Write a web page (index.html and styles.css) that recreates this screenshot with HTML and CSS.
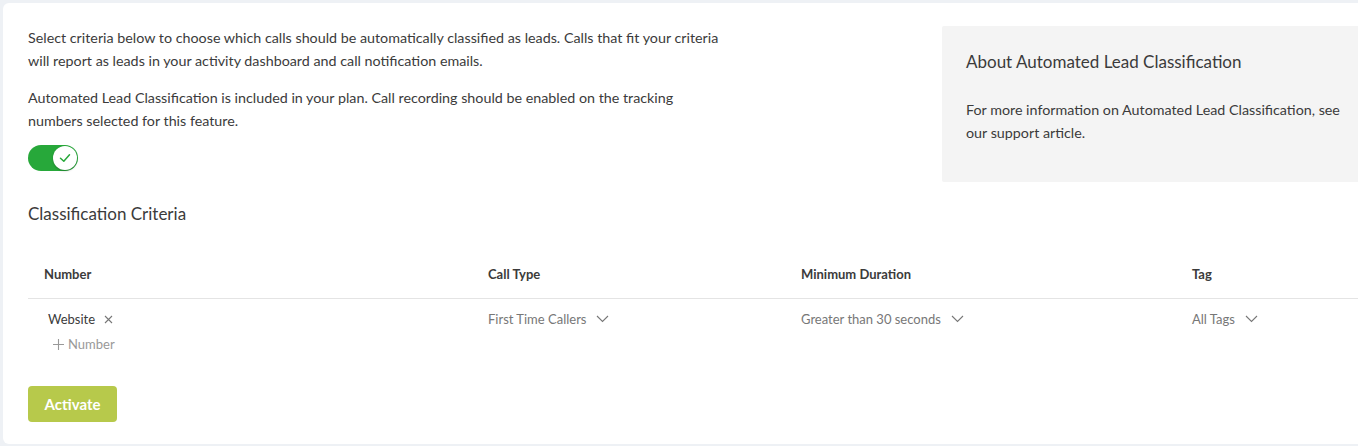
FILE: index.html
```html
<!DOCTYPE html>
<html lang="en">
<head>
  <meta charset="UTF-8">
  <meta name="viewport" content="width=device-width, initial-scale=1.0">
  <title>Automated Lead Classification</title>
  <link rel="stylesheet" href="styles.css">
</head>
<body>
  <div class="card">
    <div class="top">
      <div class="intro">
        <p>Select criteria below to choose which calls should be automatically classified as leads. Calls that fit your criteria will report as leads in your activity dashboard and call notification emails.</p>
        <p>Automated Lead Classification is included in your plan. Call recording should be enabled on the tracking numbers selected for this feature.</p>
        <div class="toggle">
          <span class="knob">
            <svg width="14" height="14" viewBox="0 0 14 14"><path d="M2.5 7.2 L5.8 10.2 L11.5 3.8" fill="none" stroke="#27a83a" stroke-width="1.5" stroke-linecap="round" stroke-linejoin="round"/></svg>
          </span>
        </div>
      </div>
      <div class="about">
        <h3>About Automated Lead Classification</h3>
        <p>For more information on Automated Lead Classification, see our support article.</p>
      </div>
    </div>

    <h2>Classification Criteria</h2>

    <div class="criteria">
      <div class="row head">
        <div class="cell first">Number</div>
        <div class="cell">Call Type</div>
        <div class="cell">Minimum Duration</div>
        <div class="cell">Tag</div>
      </div>
      <div class="row body">
        <div class="cell first">
          <div class="chip">Website
            <svg width="9" height="9" viewBox="0 0 9 9"><path d="M1 1 L8 8 M8 1 L1 8" stroke="#777" stroke-width="1.1"/></svg>
          </div>
          <div class="add">
            <svg width="11" height="11" viewBox="0 0 11 11"><path d="M5.5 0 V11 M0 5.5 H11" stroke="#999" stroke-width="1.1"/></svg>
            Number
          </div>
        </div>
        <div class="cell"><span class="select">First Time Callers <svg class="chev" width="13" height="8" viewBox="0 0 13 8"><path d="M1 1 L6.5 6.5 L12 1" fill="none" stroke="#777" stroke-width="1.1"/></svg></span></div>
        <div class="cell"><span class="select">Greater than 30 seconds <svg class="chev" width="13" height="8" viewBox="0 0 13 8"><path d="M1 1 L6.5 6.5 L12 1" fill="none" stroke="#777" stroke-width="1.1"/></svg></span></div>
        <div class="cell"><span class="select">All Tags <svg class="chev" width="13" height="8" viewBox="0 0 13 8"><path d="M1 1 L6.5 6.5 L12 1" fill="none" stroke="#777" stroke-width="1.1"/></svg></span></div>
      </div>
    </div>

    <button type="button" class="activate">Activate</button>
  </div>
</body>
</html>
```

FILE: styles.css
```css
* {
  box-sizing: border-box;
}

body {
  margin: 0;
  padding: 3px 0 0 3px;
  background-color: #eef1f5;
  font-family: Lato, "Open Sans", sans-serif;
  color: #3b3b3b;
  overflow: hidden;
}

.card {
  margin-right: -20px;
  height: 441px;
  background-color: #fff;
  border-radius: 6px;
  padding: 23px 0 0 25px;
}

.top {
  display: flex;
  align-items: flex-start;
}

.intro {
  width: 700px;
}

.intro p {
  margin: 0 0 14px 0;
  font-size: 14.3px;
  line-height: 23px;
}

.toggle {
  width: 50px;
  height: 26px;
  border-radius: 13px;
  background-color: #27a83a;
  display: flex;
  justify-content: flex-end;
  align-items: center;
  padding-right: 1px;
  margin-top: -1px;
}

.knob {
  width: 24px;
  height: 24px;
  border-radius: 50%;
  background-color: #fff;
  box-shadow: 0 1px 2px rgba(0,0,0,0.25);
  display: flex;
  justify-content: center;
  align-items: center;
}

.about {
  margin-left: 214px;
  flex: 1;
  height: 156px;
  background-color: #f4f4f4;
  border-radius: 2px;
  padding: 24px 24px 0 24px;
}

.about h3 {
  margin: 0 0 24px 0;
  font-size: 17px;
  font-weight: normal;
  line-height: 24px;
}

.about p {
  margin: 0;
  font-size: 14.3px;
  line-height: 23px;
}

h2 {
  margin: 20px 0 0 0;
  font-size: 17px;
  font-weight: normal;
  line-height: 24px;
}

.criteria {
  margin-top: 36px;
}

.row {
  display: grid;
  grid-template-columns: 444px 313px 391px 1fr;
}

.row.head {
  height: 37px;
  border-bottom: 1px solid #e4e4e4;
  font-size: 13px;
  font-weight: bold;
  line-height: 24px;
}

.row.head .cell {
  padding-left: 16px;
}

.row.body {
  padding-top: 9px;
  font-size: 13px;
  line-height: 22px;
  color: #777;
}

.row.body .cell {
  padding-left: 16px;
}

.chip {
  display: flex;
  align-items: center;
  gap: 9px;
  padding-left: 4px;
  color: #3b3b3b;
}

.add {
  display: flex;
  align-items: center;
  gap: 4px;
  padding-left: 9px;
  margin-top: 3px;
  color: #999;
}

.select {
  display: inline-flex;
  align-items: center;
  gap: 10px;
}

.activate {
  margin-top: 31px;
  width: 89px;
  height: 36px;
  border: none;
  border-radius: 4px;
  background-color: #b7c94b;
  color: #fff;
  font-family: inherit;
  font-size: 15px;
  font-weight: bold;
  cursor: pointer;
}
```
